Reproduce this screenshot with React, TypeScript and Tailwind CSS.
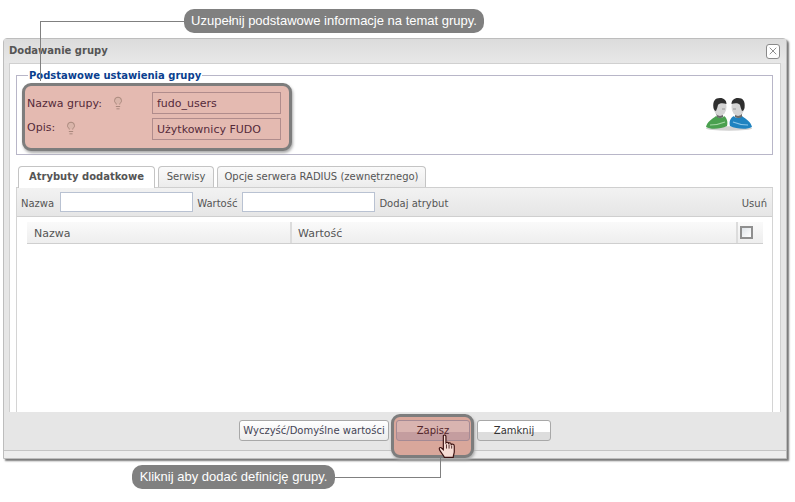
import React from "react";
import { Lightbulb, X } from "lucide-react";

const ui = "font-['DejaVu_Sans',sans-serif]";

function Users() {
  return (
    <svg width="48" height="34" viewBox="0 0 48 34" className="blur-[0.5px]">
      <ellipse cx="24" cy="30.5" rx="23" ry="2.2" fill="#d2d2d2" />
      <path d="M1 29 C2 24 7 21 11 18 C14 20 18 20 19 18 C22 20 23 24 22 28 C16 31 6 32 1 29Z" fill="#4aa04f" />
      <path d="M25 28 C24 24 25 20 29 18 C30 20 34 20 37 18 C41 21 46 24 47 29 C42 32 31 31 25 28Z" fill="#1f83c0" />
      <path d="M5 27 Q13 27 20 24" stroke="#a5d6a5" strokeWidth="1.2" fill="none" />
      <path d="M28 24 Q35 27 43 27" stroke="#8cc6e8" strokeWidth="1.2" fill="none" />
      <path d="M11 15 H18 V19 Q15 21 12 19Z" fill="#6a6a6a" />
      <path d="M30 15 H37 V19 Q33 21 30 19Z" fill="#6a6a6a" />
      <ellipse cx="15" cy="9" rx="6.5" ry="9" fill="#d4d4d4" />
      <ellipse cx="33" cy="9" rx="6.5" ry="9" fill="#d4d4d4" />
      <path d="M8.5 10 C7.5 3 10 0 15 0 C19 0 21.5 2.5 21.5 6 C18 4.5 14 5 13 7 C12.5 9 12 11 11 13 C10 13 9 12 8.5 10Z" fill="#2e2e2e" />
      <path d="M39.5 10 C40.5 3 38 0 33 0 C29 0 26.5 2.5 26.5 6 C30 4.5 34 5 35 7 C35.5 9 36 11 37 13 C38 13 39 12 39.5 10Z" fill="#2e2e2e" />
      <path d="M17 11 H20 M28 11 H31" stroke="#888" strokeWidth="0.8" />
    </svg>
  );
}

function Hand() {
  return (
    <svg width="19" height="25" viewBox="0 0 18 24">
      <path
        d="M5 1.5 C6 0.5 7.5 1 7.5 2.5 L7.5 8.5 C8.5 7.5 10 8 10 9 C11 8.2 12.5 8.6 12.5 10 C13.5 9.4 15.5 9.8 15.5 11.5 L15.5 17 C15.5 19 14.5 20 14.5 22.5 L6 22.5 C5.5 20.5 3.5 19 1.5 15.5 C0.5 13.5 1.5 12.5 3 13.2 L5 15 L5 1.5Z"
        fill="#f6dcd4"
        stroke="#3a1010"
        strokeWidth="1.1"
      />
      <path d="M8 10 V14 M10.5 10 V14 M13 11 V14" stroke="#3a1010" strokeWidth="0.8" />
    </svg>
  );
}

const tabBase = "h-[21px] flex items-center justify-center rounded-t-[4px] border border-b-0 border-[#c4c4c4] text-[10px] text-[#555] pb-[2px]";

export default function App() {
  return (
    <div className={`relative w-[795px] h-[502px] overflow-hidden bg-white ${ui}`}>
      {/* dialog */}
      <div className="absolute left-[3px] top-[38px] w-[784px] h-[421px] flex flex-col rounded-t-[4px] border border-[#bdbdbd] bg-[#e6e6e6] shadow-[2px_2px_2px_#777]">
        <div className="h-[24px] shrink-0 flex items-center justify-between pl-[5px] pr-[6px] bg-gradient-to-b from-[#dcdcdc] to-[#e8e8e8]">
          <span className="text-[10px] font-bold text-[#555] pb-[2px]">Dodawanie grupy</span>
          <span className="w-[14px] h-[15px] flex items-center justify-center bg-white border border-[#8a8a8a] rounded-[3px]">
            <X size={14} strokeWidth={1.1} className="text-[#333]" />
          </span>
        </div>
        <div className="flex-1 mx-[5px] flex flex-col bg-white border-x border-t border-[#d0d0d0] min-h-0">
          <fieldset className="ml-[6px] mr-[7px] mt-[5px] h-[86px] shrink-0 border border-[#b8b6c8] px-[11px] flex items-start justify-end">
            <legend className="px-[1px] text-[10px] leading-[13px] font-bold text-[#0a3f8f]">Podstawowe ustawienia grupy</legend>
            <div className="mt-[16px] mr-[8px]"><Users /></div>
          </fieldset>
          <div className="mt-[11px] flex items-end gap-[3px] pl-[8px] h-[22px] shrink-0 ml-[6px] mr-[7px] border-b border-[#cfcfcf]">
            <div className={`${tabBase} -ml-[6px] w-[137px] h-[22px] -mb-px bg-white font-bold text-[#444]`}>Atrybuty dodatkowe</div>
            <div className={`${tabBase} w-[56px] bg-gradient-to-b from-[#fafafa] to-[#ececec]`}>Serwisy</div>
            <div className={`${tabBase} w-[209px] bg-gradient-to-b from-[#fafafa] to-[#ececec]`}>Opcje serwera RADIUS (zewnętrznego)</div>
          </div>
          <div className="flex-1 ml-[6px] mr-[7px] flex flex-col border-x border-[#d4d4d4] min-h-0">
            <div className="h-[29px] shrink-0 flex items-center gap-[4px] pl-[4px] pr-[5px] bg-gradient-to-b from-[#f2f2f2] to-[#e6e6e6] border-b border-[#cfcfcf] text-[10px] text-[#555]">
              <span className="pt-[3px]">Nazwa</span>
              <span className="ml-[2px] w-[133px] h-[20px] bg-white border border-[#b9c2d2]" />
              <span className="pt-[3px]">Wartość</span>
              <span className="ml-[1px] w-[133px] h-[20px] bg-white border border-[#b9c2d2]" />
              <span className="pt-[3px]">Dodaj atrybut</span>
              <span className="ml-auto pt-[3px]">Usuń</span>
            </div>
            <div className="mt-[5px] ml-[10px] mr-[9px] h-[22px] shrink-0 flex bg-gradient-to-b from-[#fafafa] to-[#eeeeee] border-b border-[#cfcfcf] text-[11px] text-[#555]">
              <div className="w-[265px] pl-[7px] pt-[3px] flex items-center border-r-2 border-[#dcdcdc]">Nazwa</div>
              <div className="flex-1 pl-[6px] pt-[3px] flex items-center">Wartość</div>
              <div className="w-[27px] flex items-center pl-[2px] border-l-2 border-[#dcdcdc]">
                <span className="w-[13px] h-[13px] border-2 border-[#8f8f8f] bg-gradient-to-br from-[#dfe4e8] to-white" />
              </div>
            </div>
          </div>
        </div>
        <div className="h-[39px] shrink-0 flex items-start pl-[235px] pt-[8px] gap-[7px] bg-[#e6e6e6] border-b border-[#c4c4c4]">
          <button className="w-[150px] h-[21px] rounded-[3px] border border-[#a8a8a8] bg-gradient-to-b from-white to-[#ececec] text-[10px] text-[#445]">Wyczyść/Domyślne wartości</button>
          <button className="w-[74px] h-[21px] rounded-[3px] border border-[#a8a8a8] bg-[linear-gradient(#fff_60%,#ddd_60%)] text-[10px] text-[#333]">Zapisz</button>
          <button className="w-[74px] h-[21px] rounded-[3px] border border-[#a8a8a8] bg-[linear-gradient(#fff_60%,#ddd_60%)] text-[10px] text-[#333]">Zamknij</button>
        </div>
        <div className="h-[7px] shrink-0 bg-[#ededed]" />
      </div>

      {/* form fields on the highlight */}
      <div className="absolute left-[22px] top-[83px] w-[270px] h-[68px] rounded-[9px] border-[3px] border-[#7d7d7d] bg-[#e4bab1] shadow-[1px_2px_3px_#aaa] text-[11px] text-[#552a3a]">
        <div className="flex items-center h-[22px] mt-[6px]">
          <span className="ml-[2px] w-[84px] translate-y-[1px]">Nazwa grupy:</span>
          <Lightbulb size={14} strokeWidth={1.6} fill="#d9b5aa" className="text-[#a58478]" />
          <span className="ml-[27px] w-[129px] h-[22px] flex items-center pl-[4px] pt-[2px] border border-[#b08c8c]">fudo_users</span>
        </div>
        <div className="flex items-center h-[22px] mt-[4px]">
          <span className="ml-[2px] w-[37px] -translate-y-[1px]">Opis:</span>
          <Lightbulb size={14} strokeWidth={1.6} fill="#d9b5aa" className="text-[#a58478] -translate-y-[1px]" />
          <span className="ml-[74px] w-[129px] h-[22px] flex items-center pl-[4px] pt-[2px] border border-[#b08c8c]">Użytkownicy FUDO</span>
        </div>
      </div>

      {/* Zapisz highlight */}
      <div className="absolute left-[391px] top-[414px] w-[83px] h-[44px] rounded-[9px] border-[3px] border-[#7d7d7d] bg-[#d9a79b] shadow-[1px_2px_3px_#aaa]">
        <div className="ml-[2px] mt-[3px] w-[74px] h-[21px] rounded-[3px] border border-[#a58a94] bg-[linear-gradient(#d9b4b0_60%,#c49d9f_60%)] flex items-center justify-center text-[10px] text-[#55282c]">Zapisz</div>
      </div>
      <div className="absolute left-[438px] top-[434px]"><Hand /></div>

      {/* callouts */}
      <div className="absolute left-[40px] top-[21px] w-[145px] h-px bg-[#808080]" />
      <div className="absolute left-[40px] top-[21px] w-px h-[60px] bg-[#808080]" />
      <div className="absolute left-[184px] top-[9px] w-[300px] h-[24px] rounded-[10px] bg-[#808080] flex items-center justify-center whitespace-nowrap text-[13px] text-white font-['Liberation_Sans',sans-serif]">Uzupełnij podstawowe informacje na temat grupy.</div>
      <div className="absolute left-[440px] top-[458px] w-px h-[20px] bg-[#808080]" />
      <div className="absolute left-[335px] top-[477px] w-[106px] h-px bg-[#808080]" />
      <div className="absolute left-[132px] top-[465px] w-[203px] h-[24px] rounded-[10px] bg-[#808080] flex items-center justify-center whitespace-nowrap text-[13px] text-white font-['Liberation_Sans',sans-serif]">Kliknij aby dodać definicję grupy.</div>
    </div>
  );
}
